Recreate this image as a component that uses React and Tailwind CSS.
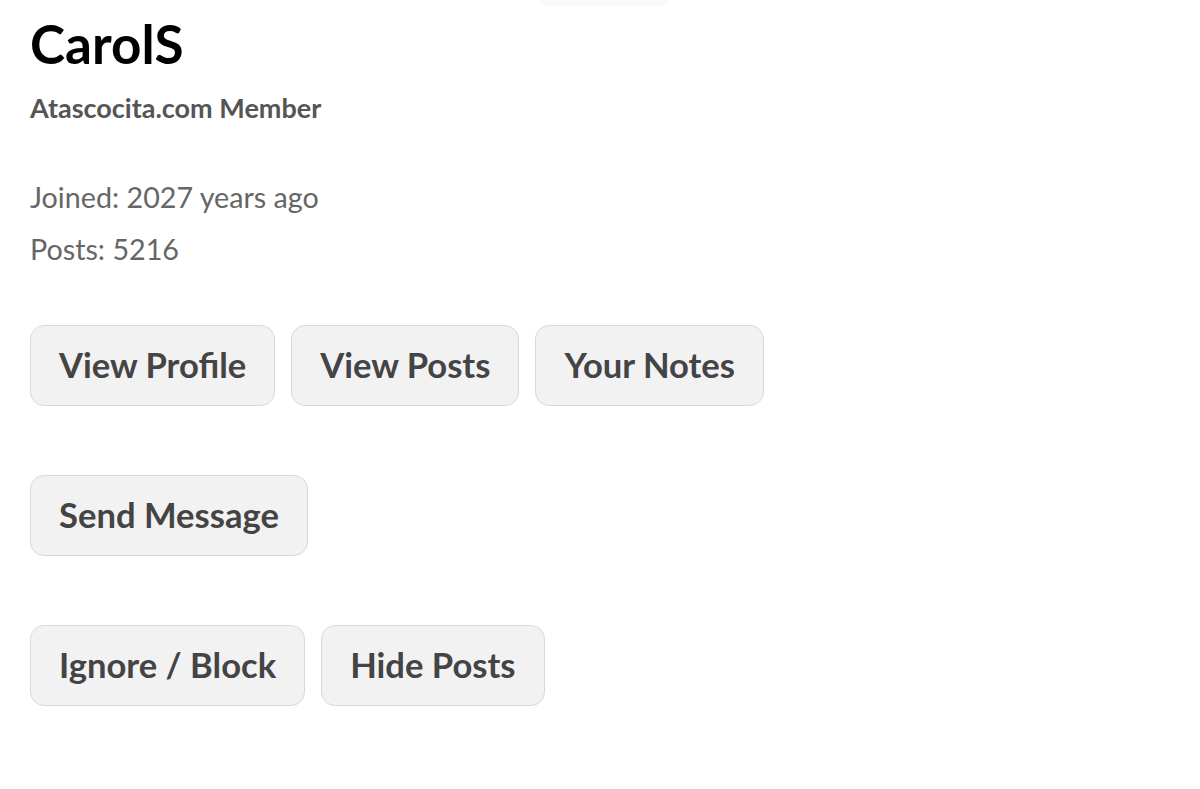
import React from 'react';

const rows = [
  ['View Profile', 'View Posts', 'Your Notes'],
  ['Send Message'],
  ['Ignore / Block', 'Hide Posts'],
];

function ActionButton({ label }) {
  return (
    <button className="h-[81px] px-[28px] rounded-[14px] border border-[#d8d8e2] bg-[#f2f2f3] text-[34.6px] font-bold text-[#444444] leading-none">
      {label}
    </button>
  );
}

export default function App() {
  return (
    <div className="relative min-h-screen bg-white font-['Lato',sans-serif] px-[30px] pt-[12px]">
      {/* faint sliver at the top edge */}
      <div className="absolute top-0 left-[540px] w-[128px] h-[6px] rounded-b-full bg-[#f9f9f9]" />

      <h1 className="text-[53px] font-bold text-black leading-[64px]">CarolS</h1>
      <p className="mt-[16px] text-[27px] font-bold text-[#555555] leading-[32px]">Atascocita.com Member</p>

      <div className="mt-[57px] flex flex-col gap-[20px] text-[28.7px] text-[#666666] leading-[32px]">
        <p>Joined: 2027 years ago</p>
        <p>Posts: 5216</p>
      </div>

      <div className="mt-[60px] flex flex-col gap-[69px]">
        {rows.map((row, i) => (
          <div key={i} className="flex gap-[16px]">
            {row.map(label => (
              <ActionButton key={label} label={label} />
            ))}
          </div>
        ))}
      </div>
    </div>
  );
}
